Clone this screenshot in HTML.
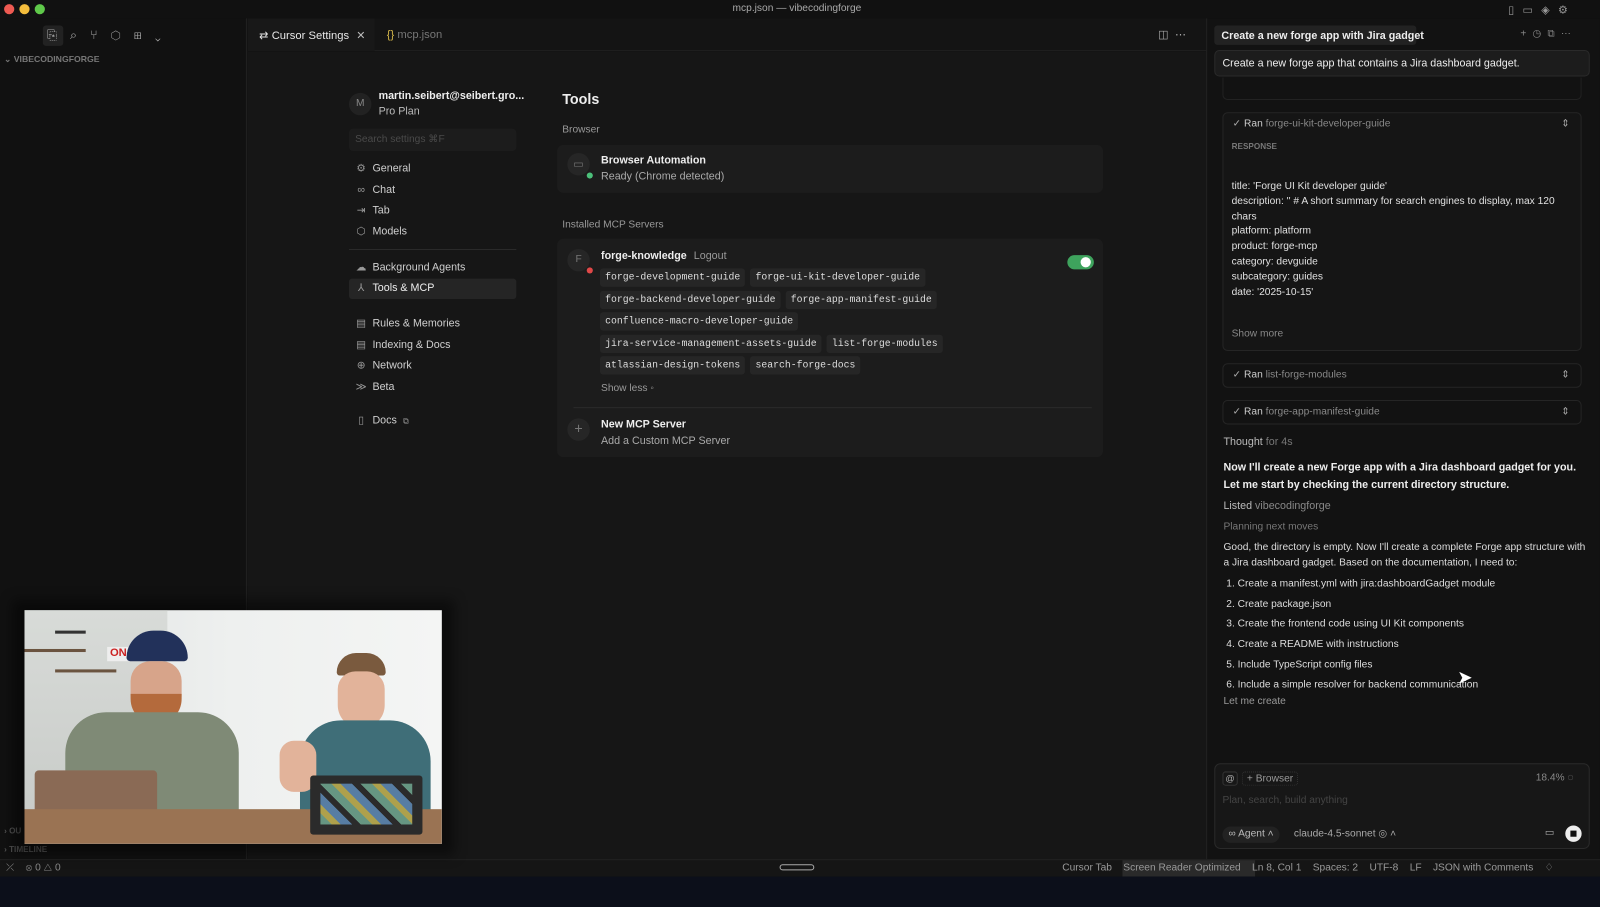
<!DOCTYPE html>
<html><head><meta charset="utf-8">
<style>
*{box-sizing:border-box;margin:0;padding:0}
body{width:1600px;height:887px;background:#141414;font-family:"Liberation Sans",sans-serif;color:#ddd;overflow:hidden;font-size:11px}
#s{position:relative;width:1568px;height:870px;transform:scale(1.0204);transform-origin:0 0}
.abs{position:absolute}
.row{position:absolute;left:588px;display:flex;gap:5px}
.chip{background:#262626;border-radius:3px;padding:0 5px;font-family:"Liberation Mono",monospace;font-size:9.6px;color:#ddd;height:18px;line-height:18px;white-space:nowrap}
.nav{position:absolute;left:348px;font-size:10.5px;color:#cfcfcf}
.nav span{display:inline-block;width:12px;color:#999;margin-right:5px;text-align:center}
.ct{position:absolute;left:1199px;font-size:10.5px;color:#e6e6e6}
</style></head><body><div id="s">
<div class="abs" style="left:0;top:0;width:1600px;height:18px;background:#111"></div>
<div class="abs" style="left:4px;top:4px;width:10px;height:10px;border-radius:50%;background:#ee5a52"></div>
<div class="abs" style="left:19px;top:4px;width:10px;height:10px;border-radius:50%;background:#f4bd3c"></div>
<div class="abs" style="left:34px;top:4px;width:10px;height:10px;border-radius:50%;background:#5fc94a"></div>
<div class="abs" style="left:0;top:3px;width:1562px;text-align:center;font-size:10px;color:#aaa">mcp.json — vibecodingforge</div>
<div class="abs" style="left:1478px;top:3px;font-size:11px;color:#999;letter-spacing:8px">▯▭◈⚙</div>
<div class="abs" style="left:0;top:18px;width:242px;height:824px;background:#111;border-right:1px solid #222"></div>
<div class="abs" style="left:42px;top:25px;width:20px;height:20px;background:#222;border-radius:3px"></div>
<div class="abs" style="left:46px;top:27px;font-size:12px;color:#aaa;letter-spacing:13px">⎘⌕⑂⬡⊞⌄</div>
<div class="abs" style="left:4px;top:53px;font-size:8.5px;font-weight:bold;color:#777">⌄ VIBECODINGFORGE</div>
<div class="abs" style="left:243px;top:18px;width:939px;height:32px;background:#141414;border-bottom:1px solid #1e1e1e"></div>
<div class="abs" style="left:243px;top:18px;width:124px;height:32px;background:#181818"></div>
<div class="abs" style="left:254px;top:28px;font-size:11px;color:#e8e8e8">⇄ Cursor Settings <span style="color:#bbb;margin-left:4px">✕</span></div>
<div class="abs" style="left:379px;top:28px;font-size:11px;color:#777"><span style="color:#d6b84a">{}</span> mcp.json</div>
<div class="abs" style="left:1135px;top:27px;font-size:11px;color:#aaa">◫ &nbsp;⋯</div>
<div class="abs" style="left:243px;top:51px;width:939px;height:791px;background:#161616"></div>
<div class="abs" style="left:342px;top:91px;width:22px;height:22px;border-radius:50%;background:#222;color:#888;font-size:10px;text-align:center;line-height:22px">M</div>
<div class="abs" style="left:371px;top:88px;font-size:10.5px;color:#eee;font-weight:bold">martin.seibert@seibert.gro...</div>
<div class="abs" style="left:371px;top:103px;font-size:10.5px;color:#bbb">Pro Plan</div>
<div class="abs" style="left:342px;top:126px;width:164px;height:22px;background:#1c1c1c;border-radius:4px;color:#4a4a4a;font-size:10px;padding:5px 6px">Search settings ⌘F</div>
<div class="nav" style="top:159px"><span>⚙</span>General</div>
<div class="nav" style="top:180px"><span>∞</span>Chat</div>
<div class="nav" style="top:200px"><span>⇥</span>Tab</div>
<div class="nav" style="top:221px"><span>⬡</span>Models</div>
<div class="abs" style="left:342px;top:244px;width:164px;height:1px;background:#2a2a2a"></div>
<div class="abs" style="left:342px;top:273px;width:164px;height:20px;background:#252525;border-radius:3px"></div>
<div class="nav" style="top:256px"><span>☁</span>Background Agents</div>
<div class="nav" style="top:276px;color:#eee"><span>⅄</span>Tools &amp; MCP</div>
<div class="nav" style="top:311px"><span>▤</span>Rules &amp; Memories</div>
<div class="nav" style="top:332px"><span>▤</span>Indexing &amp; Docs</div>
<div class="nav" style="top:352px"><span>⊕</span>Network</div>
<div class="nav" style="top:373px"><span>≫</span>Beta</div>
<div class="nav" style="top:406px"><span>▯</span>Docs <span style="font-size:8px">⧉</span></div>

<div class="abs" style="left:551px;top:89px;font-size:14px;font-weight:bold;color:#eee">Tools</div>
<div class="abs" style="left:551px;top:122px;font-size:10px;color:#999">Browser</div>
<div class="abs" style="left:546px;top:142px;width:535px;height:47px;background:#1c1c1c;border-radius:6px"></div>
<div class="abs" style="left:556px;top:150px;width:22px;height:22px;border-radius:50%;background:#262626;color:#777;text-align:center;line-height:22px">▭</div>
<div class="abs" style="left:575px;top:169px;width:6px;height:6px;border-radius:50%;background:#4cc07a"></div>
<div class="abs" style="left:589px;top:151px;font-size:10.5px;font-weight:bold;color:#eee">Browser Automation</div>
<div class="abs" style="left:589px;top:167px;font-size:10.5px;color:#aaa">Ready (Chrome detected)</div>
<div class="abs" style="left:551px;top:215px;font-size:10px;color:#999">Installed MCP Servers</div>
<div class="abs" style="left:546px;top:234px;width:535px;height:214px;background:#1c1c1c;border-radius:6px"></div>
<div class="abs" style="left:556px;top:244px;width:22px;height:22px;border-radius:50%;background:#262626;color:#777;text-align:center;line-height:22px;font-size:10px">F</div>
<div class="abs" style="left:575px;top:262px;width:6px;height:6px;border-radius:50%;background:#e04848"></div>
<div class="abs" style="left:589px;top:245px;font-size:10.5px;font-weight:bold;color:#eee">forge-knowledge <span style="font-weight:normal;color:#999;margin-left:4px">Logout</span></div>
<div class="abs" style="left:1046px;top:250px;width:26px;height:14px;border-radius:7px;background:#3ea35d"></div>
<div class="abs" style="left:1059px;top:252px;width:10px;height:10px;border-radius:50%;background:#fff"></div>
<div class="row" style="top:263px"><div class="chip">forge-development-guide</div><div class="chip">forge-ui-kit-developer-guide</div></div>
<div class="row" style="top:285px"><div class="chip">forge-backend-developer-guide</div><div class="chip">forge-app-manifest-guide</div></div>
<div class="row" style="top:306px"><div class="chip">confluence-macro-developer-guide</div></div>
<div class="row" style="top:328px"><div class="chip">jira-service-management-assets-guide</div><div class="chip">list-forge-modules</div></div>
<div class="row" style="top:349px"><div class="chip">atlassian-design-tokens</div><div class="chip">search-forge-docs</div></div>
<div class="abs" style="left:589px;top:375px;font-size:10px;color:#999">Show less ◦</div>
<div class="abs" style="left:562px;top:399px;width:508px;height:1px;background:#2a2a2a"></div>
<div class="abs" style="left:556px;top:410px;width:22px;height:22px;border-radius:50%;background:#262626;color:#777;text-align:center;line-height:21px;font-size:14px">+</div>
<div class="abs" style="left:589px;top:410px;font-size:10.5px;font-weight:bold;color:#eee">New MCP Server</div>
<div class="abs" style="left:589px;top:426px;font-size:10.5px;color:#aaa">Add a Custom MCP Server</div>

<div class="abs" style="left:1182px;top:18px;width:386px;height:824px;background:#121212;border-left:1px solid #222"></div>
<div class="abs" style="left:1568px;top:18px;width:40px;height:824px;background:#0e0e0e"></div>
<div class="abs" style="left:1190px;top:25px;width:198px;height:19px;background:#222;border-radius:3px"></div>
<div class="abs" style="left:1197px;top:29px;font-size:10.5px;color:#eee;font-weight:bold">Create a new forge app with Jira gadget</div>
<div class="abs" style="left:1490px;top:28px;font-size:10px;color:#888;letter-spacing:6px">+◷⧉⋯</div>
<div class="abs" style="left:1190px;top:49px;width:368px;height:26px;background:#1c1c1c;border:1px solid #2a2a2a;border-radius:5px"></div>
<div class="abs" style="left:1198px;top:56px;font-size:10.5px;color:#eee">Create a new forge app that contains a Jira dashboard gadget.</div>
<div class="abs" style="left:1198px;top:76px;width:352px;height:22px;border:1px solid #222;border-top:none;border-radius:0 0 5px 5px"></div>
<div class="abs" style="left:1198px;top:110px;width:352px;height:234px;border:1px solid #252525;border-radius:5px;background:#151515"></div>
<div class="abs" style="left:1208px;top:116px;font-size:10px;color:#aaa">✓ <span style="color:#ccc">Ran</span> <span style="color:#888">forge-ui-kit-developer-guide</span></div>
<div class="abs" style="left:1530px;top:116px;font-size:10px;color:#aaa">⇕</div>
<div class="abs" style="left:1207px;top:139px;font-size:8px;font-weight:bold;color:#777">RESPONSE</div>
<div class="abs" style="left:1207px;top:176px;font-size:10px;color:#e0e0e0;line-height:14.8px;width:335px">title: 'Forge UI Kit developer guide'<br>description: '' # A short summary for search engines to display, max 120 chars<br>platform: platform<br>product: forge-mcp<br>category: devguide<br>subcategory: guides<br>date: '2025-10-15'</div>
<div class="abs" style="left:1207px;top:322px;font-size:10px;color:#888">Show more</div>
<div class="abs" style="left:1198px;top:356px;width:352px;height:24px;border:1px solid #252525;border-radius:5px"></div>
<div class="abs" style="left:1208px;top:362px;font-size:10px;color:#aaa">✓ <span style="color:#ccc">Ran</span> <span style="color:#888">list-forge-modules</span></div>
<div class="abs" style="left:1530px;top:362px;font-size:10px;color:#aaa">⇕</div>
<div class="abs" style="left:1198px;top:392px;width:352px;height:24px;border:1px solid #252525;border-radius:5px"></div>
<div class="abs" style="left:1208px;top:398px;font-size:10px;color:#aaa">✓ <span style="color:#ccc">Ran</span> <span style="color:#888">forge-app-manifest-guide</span></div>
<div class="abs" style="left:1530px;top:398px;font-size:10px;color:#aaa">⇕</div>
<div class="ct" style="top:427px;color:#bbb">Thought <span style="color:#777">for 4s</span></div>
<div class="ct" style="top:450px;width:350px;line-height:16.5px;font-weight:bold;color:#eee">Now I'll create a new Forge app with a Jira dashboard gadget for you. Let me start by checking the current directory structure.</div>
<div class="ct" style="top:490px;color:#bbb">Listed <span style="color:#888">vibecodingforge</span></div>
<div class="ct" style="top:511px;color:#777;font-size:10px">Planning next moves</div>
<div class="ct" style="top:529px;width:355px;line-height:15px;font-size:10px;color:#ddd">Good, the directory is empty. Now I'll create a complete Forge app structure with a Jira dashboard gadget. Based on the documentation, I need to:</div>
<div class="ct" style="top:563px;font-size:10px;line-height:19.7px;color:#ddd">&nbsp;1. Create a manifest.yml with jira:dashboardGadget module<br>&nbsp;2. Create package.json<br>&nbsp;3. Create the frontend code using UI Kit components<br>&nbsp;4. Create a README with instructions<br>&nbsp;5. Include TypeScript config files<br>&nbsp;6. Include a simple resolver for backend communication</div>
<div class="ct" style="top:682px;font-size:10px;color:#999">Let me create</div>
<div class="abs" style="left:1428px;top:654px;font-size:18px;color:#fff">➤</div>
<div class="abs" style="left:1190px;top:748px;width:368px;height:84px;background:#171717;border:1px solid #2a2a2a;border-radius:6px"></div>
<div class="abs" style="left:1198px;top:756px;width:15px;height:14px;border:1px solid #333;border-radius:3px;font-size:9px;color:#aaa;text-align:center;line-height:12px">@</div>
<div class="abs" style="left:1217px;top:756px;height:14px;border:1px dotted #333;border-radius:3px;font-size:10px;color:#999;padding:0 4px;line-height:13px">+ Browser</div>
<div class="abs" style="left:1505px;top:757px;font-size:10px;color:#888">18.4% ◌</div>
<div class="abs" style="left:1198px;top:779px;font-size:10px;color:#444">Plan, search, build anything</div>
<div class="abs" style="left:1198px;top:810px;height:16px;border-radius:8px;background:#222;font-size:10px;color:#bbb;padding:2px 6px">∞ Agent ˄</div>
<div class="abs" style="left:1268px;top:812px;font-size:10px;color:#aaa">claude-4.5-sonnet ◎ ˄</div>
<div class="abs" style="left:1514px;top:811px;font-size:10px;color:#aaa">▭</div>
<div class="abs" style="left:1534px;top:809px;width:16px;height:16px;border-radius:50%;background:#eee"></div>
<div class="abs" style="left:1539px;top:814px;width:6px;height:6px;background:#111"></div>
<div class="abs" style="left:0;top:842px;width:1600px;height:17px;background:#151515;border-top:1px solid #222"></div>
<div class="abs" style="left:6px;top:845px;font-size:10px;color:#888">⤫ &nbsp;&nbsp;&nbsp;⊗ 0 △ 0</div>
<div class="abs" style="left:764px;top:847px;width:34px;height:6px;border:1px solid #aaa;border-radius:3px"></div>
<div class="abs" style="left:1100px;top:843px;width:130px;height:16px;background:#2a2a2a"></div>
<div class="abs" style="left:1041px;top:845px;font-size:10px;color:#999">Cursor Tab &nbsp;&nbsp;&nbsp;Screen Reader Optimized &nbsp;&nbsp;&nbsp;Ln 8, Col 1 &nbsp;&nbsp;&nbsp;Spaces: 2 &nbsp;&nbsp;&nbsp;UTF-8 &nbsp;&nbsp;&nbsp;LF &nbsp;&nbsp;&nbsp;JSON with Comments &nbsp;&nbsp;&nbsp;♢</div>
<div class="abs" style="left:0;top:859px;width:1600px;height:30px;background:#0c0f1a"></div>
<div class="abs" style="left:4px;top:810px;font-size:8px;color:#555;font-weight:bold">› OU<br><br>› TIMELINE</div>
<div class="abs" style="left:12px;top:588px;width:433px;height:250px;background:rgba(0,0,0,.45);filter:blur(6px)"></div>
<div class="abs" style="left:24px;top:598px;width:409px;height:229px;overflow:hidden;background:linear-gradient(90deg,#dfe2e1 0%,#eef0ef 50%,#f4f5f4 100%)">
 <div class="abs" style="left:0;top:0;width:140px;height:200px;background:linear-gradient(180deg,#d8dbd8,#c9ccc9)"></div>
 <div class="abs" style="left:30px;top:20px;width:30px;height:3px;background:#333"></div>
 <div class="abs" style="left:0;top:38px;width:60px;height:3px;background:#6b5440"></div>
 <div class="abs" style="left:30px;top:58px;width:60px;height:3px;background:#6b5440"></div>
 <div class="abs" style="left:81px;top:36px;width:22px;height:14px;background:#eee;color:#c22;font-size:11px;font-weight:bold;text-align:center">ON</div>
 <div class="abs" style="left:100px;top:20px;width:60px;height:30px;border-radius:30px 30px 4px 4px;background:#22315a"></div>
 <div class="abs" style="left:104px;top:50px;width:50px;height:58px;border-radius:20px 20px 26px 26px;background:#d7a48a"></div>
 <div class="abs" style="left:104px;top:82px;width:50px;height:30px;border-radius:0 0 26px 26px;background:#b46a3c"></div>
 <div class="abs" style="left:40px;top:100px;width:170px;height:110px;border-radius:40px 40px 0 0;background:#7f8a76"></div>
 <div class="abs" style="left:10px;top:157px;width:120px;height:60px;background:#8a6a55;border-radius:4px"></div>
 <div class="abs" style="left:306px;top:42px;width:48px;height:22px;border-radius:24px 24px 4px 4px;background:#7a5a3e"></div>
 <div class="abs" style="left:307px;top:60px;width:46px;height:56px;border-radius:18px 18px 24px 24px;background:#e2b39a"></div>
 <div class="abs" style="left:270px;top:108px;width:128px;height:100px;border-radius:40px 40px 0 0;background:#3f6e78"></div>
 <div class="abs" style="left:250px;top:128px;width:36px;height:50px;border-radius:14px;background:#e2b39a"></div>
 <div class="abs" style="left:0;top:195px;width:409px;height:34px;background:#9a7353"></div>
 <div class="abs" style="left:280px;top:162px;width:110px;height:58px;background:#2b2b2b;border-radius:3px"></div>
 <div class="abs" style="left:290px;top:170px;width:90px;height:40px;background:repeating-linear-gradient(45deg,#7fc4a8 0 8px,#e6d35a 8px 14px,#6aa0d6 14px 22px,#2b2b2b 22px 28px);opacity:.7"></div>
</div>
</div></body></html>
